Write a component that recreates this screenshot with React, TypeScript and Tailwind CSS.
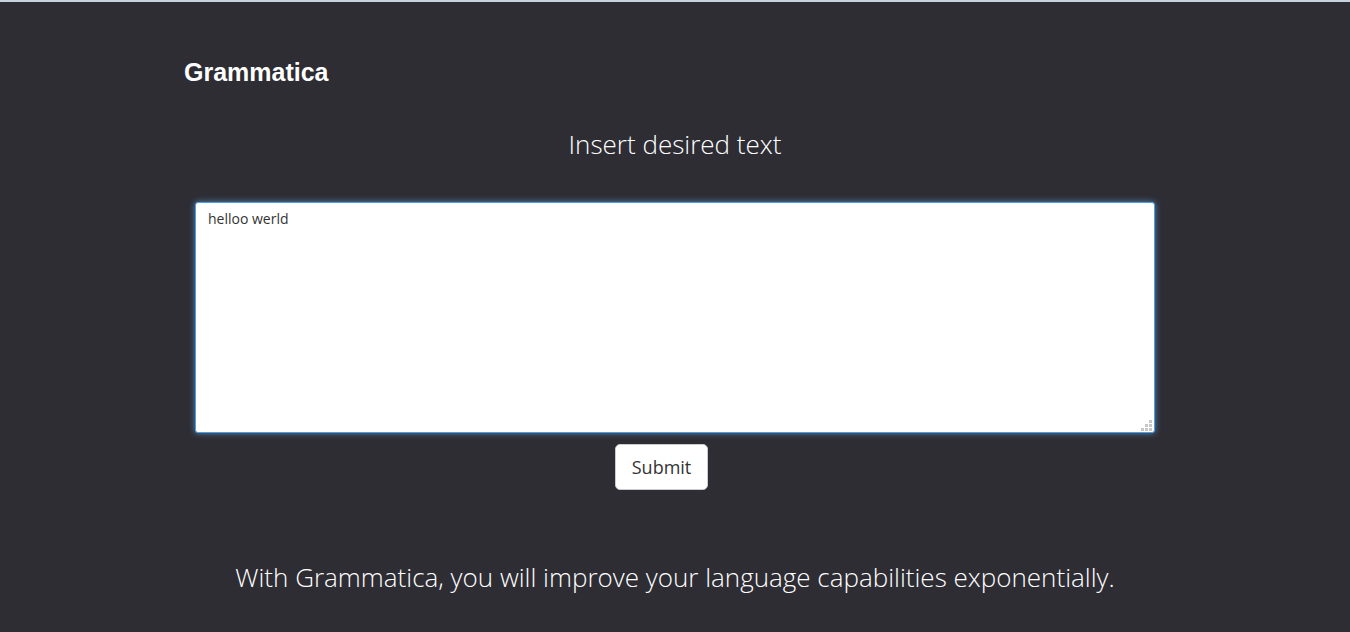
import React from 'react';

const App: React.FC = () => {
  return (
    <div className="min-h-[632px] bg-[#2e2d34] border-t-2 border-[#c9d3e0] font-['Open_Sans',sans-serif] text-white">
      <div className="pl-[184px] pt-[55px]">
        <h1 className="font-['Liberation_Sans',sans-serif] font-bold text-[25px] leading-[30px]">Grammatica</h1>
      </div>
      <h2 className="text-center font-light text-[26px] leading-[36px] mt-[39px]">Insert desired text</h2>
      <div className="flex flex-col items-center mt-[40px]">
        <div className="relative">
          <textarea
            defaultValue="helloo werld"
            spellCheck={false}
            className="block w-[960px] h-[231px] bg-white text-[#333] text-[14px] leading-[20px] px-[12px] py-[6px] rounded-[3px] border border-[#4a9ee8] shadow-[0_0_6px_rgba(102,175,233,0.7)] outline-none resize-none"
          />
          <svg className="absolute right-[2px] bottom-[2px]" width="12" height="12" viewBox="0 0 12 12">
            <rect x="8" y="1" width="3" height="3" fill="#c8c8c8" />
            <rect x="4" y="5" width="3" height="3" fill="#c8c8c8" />
            <rect x="8" y="5" width="3" height="3" fill="#c8c8c8" />
            <rect x="0" y="9" width="3" height="3" fill="#c8c8c8" />
            <rect x="4" y="9" width="3" height="3" fill="#c8c8c8" />
            <rect x="8" y="9" width="3" height="3" fill="#c8c8c8" />
          </svg>
        </div>
        <button className="mt-[11px] mr-[27px] w-[93px] h-[46px] bg-white text-[#333] text-[18px] rounded-[5px] border border-[#ccc]">
          Submit
        </button>
      </div>
      <p className="text-center font-light text-[26px] leading-[36px] mt-[69px]">
        With Grammatica, you will improve your language capabilities exponentially.
      </p>
    </div>
  );
};

export default App;
